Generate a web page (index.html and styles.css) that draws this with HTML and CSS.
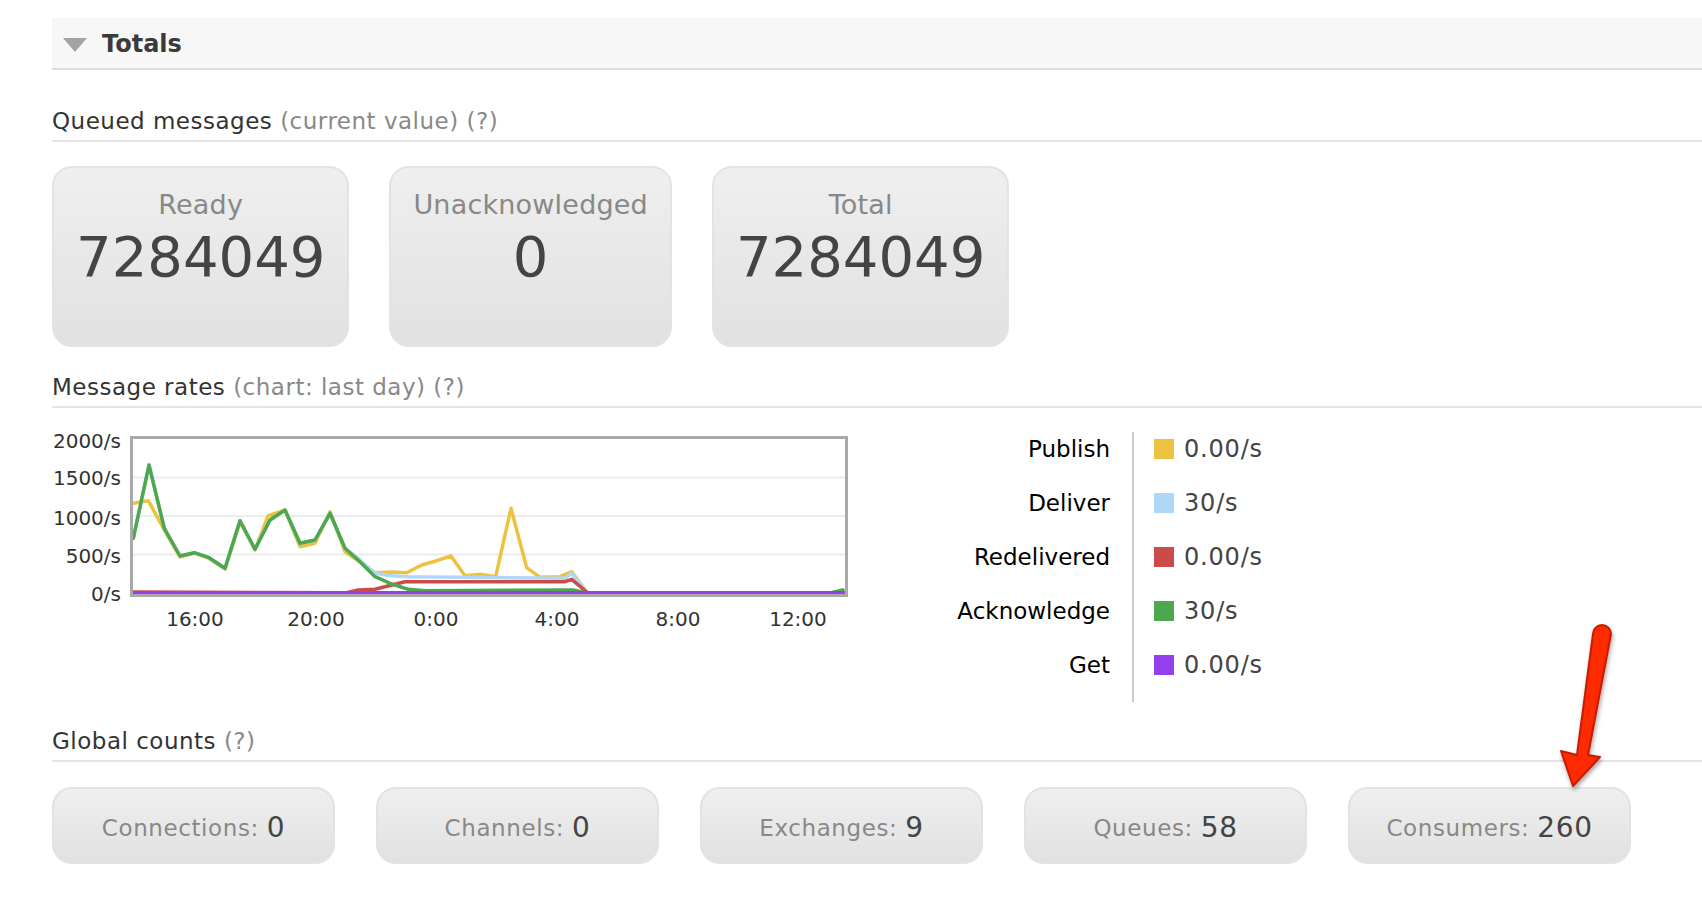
FILE: index.html
```html
<!DOCTYPE html>
<html>
<head>
<meta charset="utf-8">
<title>Overview</title>
<link rel="stylesheet" href="styles.css">
</head>
<body>
<div class="page">
  <div class="section-head"><span class="tri"></span><span class="title">Totals</span></div>

  <h3 class="subhead first">Queued messages <span class="muted">(current value) (?)</span></h3>
  <div class="highlights">
    <div class="hl"><div class="hl-label">Ready</div><div class="hl-value">7284049</div></div>
    <div class="hl"><div class="hl-label">Unacknowledged</div><div class="hl-value">0</div></div>
    <div class="hl"><div class="hl-label">Total</div><div class="hl-value">7284049</div></div>
  </div>

  <h3 class="subhead">Message rates <span class="muted">(chart: last day) (?)</span></h3>
  <div class="rates">
    <svg class="chart" width="800" height="200" viewBox="0 0 800 200">
      <g class="grid">
        <line x1="81" y1="45.5" x2="794" y2="45.5"/>
        <line x1="81" y1="84" x2="794" y2="84"/>
        <line x1="81" y1="122.5" x2="794" y2="122.5"/>
      </g>
      <polyline class="s-publish" points="81.3,71.3 96.3,68.7 112.3,98 128,125 142.3,121 156.3,126 173,137 188,90 203,118 216,84 233,78 248,114.7 263,111.3 278,79.7 293,119.7 308,130 323,140.7 339.7,140 354.7,140.7 369.7,133 384.7,128.7 399,124 413,143.7 428,142.3 443.7,144.7 459,76.3 474.7,135.7 488,145.3 508,144.7 519.7,139.7 534.7,160"/>
      <polyline class="s-deliver" points="81.3,106.3 97,33 112.3,96.3 128,124 142.3,120.7 156.3,125.3 173,136.3 188,88.7 203,117.3 218,88 233,78 248,111.3 263,108 278,81.3 293,116.3 308,128 323,141.3 339.7,143.7 356,144.7 513,146.3 519.7,141.3 534.7,160"/>
      <polyline class="s-redeliver" points="81,160 294.7,160.7 306.3,158 323,157.3 339.7,153 353,149.7 513,149.7 519.7,147.3 534.7,160"/>
      <polyline class="s-ack" points="81.3,106.3 97,33 112.3,96.3 128,124 142.3,120.7 156.3,125.3 173,136.3 188,88.7 203,117.3 218,88 233,78 248,111.3 263,108 278,81.3 293,116.3 308,129.7 323,144.7 339.7,152 356.3,157.3 373,158.7 521,158 535,161 778,161 791,158"/>
      <polyline class="s-get" points="81,161 794,161"/>
      <rect class="frame" x="79.5" y="5.5" width="715" height="158"/>
      <g class="tick ytick">
        <text x="69" y="10">2000/s</text>
        <text x="69" y="47">1500/s</text>
        <text x="69" y="87">1000/s</text>
        <text x="69" y="125">500/s</text>
        <text x="69" y="163">0/s</text>
      </g>
      <g class="tick xtick">
        <text x="143" y="188">16:00</text>
        <text x="264" y="188">20:00</text>
        <text x="384" y="188">0:00</text>
        <text x="505" y="188">4:00</text>
        <text x="626" y="188">8:00</text>
        <text x="746" y="188">12:00</text>
      </g>
    </svg>
    <div class="legend">
      <div class="lg-labels">
        <div class="lg-row">Publish</div>
        <div class="lg-row">Deliver</div>
        <div class="lg-row">Redelivered</div>
        <div class="lg-row">Acknowledge</div>
        <div class="lg-row">Get</div>
      </div>
      <div class="lg-values">
        <div class="lg-row"><span class="sw sw-publish"></span>0.00/s</div>
        <div class="lg-row"><span class="sw sw-deliver"></span>30/s</div>
        <div class="lg-row"><span class="sw sw-redeliver"></span>0.00/s</div>
        <div class="lg-row"><span class="sw sw-ack"></span>30/s</div>
        <div class="lg-row"><span class="sw sw-get"></span>0.00/s</div>
      </div>
    </div>
  </div>

  <h3 class="subhead">Global counts <span class="muted">(?)</span></h3>
  <div class="counts">
    <div class="cnt">Connections: <b>0</b></div>
    <div class="cnt">Channels: <b>0</b></div>
    <div class="cnt">Exchanges: <b>9</b></div>
    <div class="cnt">Queues: <b>58</b></div>
    <div class="cnt">Consumers: <b>260</b></div>
  </div>

  <svg class="annot" width="80" height="180" viewBox="0 0 80 180">
    <path d="M43 14 L27 135 L11 131 L23 166 L50 137 L38 135 L61 14 A9 9 0 0 0 43 14 Z"/>
  </svg>
</div>
</body>
</html>
```
FILE: styles.css
```css
html, body {
  margin: 0;
  padding: 0;
  background: #fff;
}

body {
  font-family: "DejaVu Sans", Verdana, sans-serif;
  color: #333;
}

.page {
  position: relative;
  padding: 18px 0 0 52px;
}

.section-head {
  height: 50px;
  background: #f7f7f7;
  border-bottom: 2px solid #ddd;
  display: flex;
  align-items: center;
  padding-left: 11px;
}

.tri {
  width: 0;
  height: 0;
  border-left: 12px solid transparent;
  border-right: 12px solid transparent;
  border-top: 14px solid #a3a3a3;
  margin-right: 15px;
  margin-top: 3px;
}

.title {
  font-weight: bold;
  font-size: 24px;
  color: #3a3a3a;
  padding-top: 2px;
}

.subhead {
  margin: 24px 0 0;
  font-size: 23px;
  letter-spacing: 0.5px;
  font-weight: normal;
  line-height: 28px;
  padding-bottom: 5px;
  border-bottom: 2px solid #e4e4e4;
  color: #333;
}

.subhead.first {
  margin-top: 37px;
}

.highlights + .subhead {
  margin-top: 26px;
}

.rates + .subhead {
  margin-top: 25px;
}

.muted {
  color: #888;
}

.highlights {
  display: flex;
  gap: 40px;
  margin-top: 24px;
}

.hl {
  height: 181px;
  box-sizing: border-box;
  padding: 20px 22px 0;
  border: 2px solid #e3e3e3;
  border-radius: 20px;
  background: linear-gradient(#efefef, #e1e1e1);
  text-align: center;
}

.hl-label {
  font-size: 27px;
  letter-spacing: 0.2px;
  line-height: 34px;
  color: #888;
}

.hl-value {
  font-size: 56px;
  line-height: 70px;
  color: #444;
}

.rates {
  display: flex;
  margin-top: 24px;
}

.chart {
  display: block;
  flex: none;
  overflow: visible;
}

.grid line {
  stroke: #ececec;
  stroke-width: 2;
}

.chart polyline {
  fill: none;
  stroke-width: 3.5;
  stroke-linejoin: round;
  stroke-linecap: round;
}

.s-publish { stroke: #edc240; }
.s-deliver { stroke: #afd8f8; }
.s-redeliver { stroke: #cb4b4b; }
.s-ack { stroke: #4da74d; }
.chart .s-get { stroke: #9440ed; stroke-width: 4; stroke-linecap: butt; }

.frame {
  fill: none;
  stroke: #a9a9a9;
  stroke-width: 3;
}

.tick text {
  font-family: "DejaVu Sans", Verdana, sans-serif;
  font-size: 20px;
  fill: #333;
  dominant-baseline: middle;
}

.ytick text {
  text-anchor: end;
}

.xtick text {
  text-anchor: middle;
}

.legend {
  display: flex;
}

.lg-labels {
  width: 258px;
  padding-right: 22px;
  border-right: 2px solid #ccc;
  text-align: right;
  color: #000;
}

.lg-values {
  padding-left: 20px;
  color: #444;
}

.lg-row {
  height: 54px;
  line-height: 34px;
  font-size: 23px;
}

.lg-values .lg-row {
  display: flex;
  align-items: center;
  height: 34px;
  margin-bottom: 20px;
  font-size: 24px;
  letter-spacing: 0.8px;
}

.sw {
  width: 20px;
  height: 20px;
  margin-right: 10px;
  flex: none;
}

.sw-publish { background: #edc240; }
.sw-deliver { background: #afd8f8; }
.sw-redeliver { background: #cb4b4b; }
.sw-ack { background: #4da74d; }
.sw-get { background: #9440ed; }

.counts {
  display: flex;
  gap: 41px;
  margin-top: 25px;
}

.cnt {
  width: 283px;
  height: 77px;
  box-sizing: border-box;
  padding-top: 4px;
  border: 2px solid #e3e3e3;
  border-radius: 20px;
  background: linear-gradient(#efefef, #e1e1e1);
  display: flex;
  align-items: center;
  justify-content: center;
  font-size: 23px;
  letter-spacing: 0.6px;
  color: #888;
  white-space: pre;
}

.cnt b {
  font-weight: normal;
  font-size: 28px;
  color: #444;
}

.annot {
  position: absolute;
  left: 1550px;
  top: 620px;
  overflow: visible;
  filter: drop-shadow(1px 3px 2px rgba(0, 0, 0, 0.35));
}

.annot path {
  fill: #ff2a00;
  stroke: #c91b00;
  stroke-width: 2;
  stroke-linejoin: round;
}
```
